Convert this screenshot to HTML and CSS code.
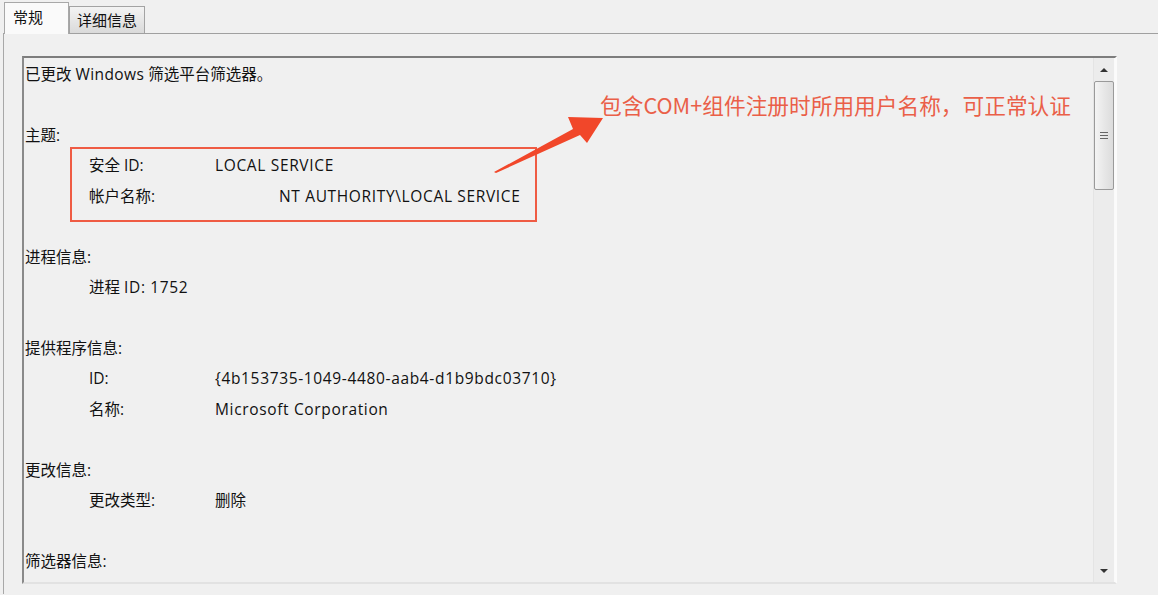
FILE: index.html
```html
<!DOCTYPE html>
<html lang="zh-CN">
<head>
<meta charset="utf-8">
<title>事件属性</title>
<link rel="stylesheet" href="styles.css">
</head>
<body>
<div class="tabs">
  <div class="tab tab-active">常规</div>
  <div class="tab">详细信息</div>
</div>
<div class="panel">
  <div class="textbox">
    <div class="content">
      <div class="line">已更改 <span class="lat">Windows</span> 筛选平台筛选器。</div>
      <div class="line"></div>
      <div class="line">主题:</div>
      <div class="line row"><span class="lbl">安全 ID:</span><span class="val">LOCAL SERVICE</span></div>
      <div class="line row"><span class="lbl">帐户名称:</span><span class="val far">NT AUTHORITY\LOCAL SERVICE</span></div>
      <div class="line"></div>
      <div class="line">进程信息:</div>
      <div class="line row">进程 <span class="val">ID: 1752</span></div>
      <div class="line"></div>
      <div class="line">提供程序信息:</div>
      <div class="line row"><span class="lbl">ID:</span><span class="val">{4b153735-1049-4480-aab4-d1b9bdc03710}</span></div>
      <div class="line row"><span class="lbl">名称:</span><span class="val">Microsoft Corporation</span></div>
      <div class="line"></div>
      <div class="line">更改信息:</div>
      <div class="line row"><span class="lbl">更改类型:</span><span>删除</span></div>
      <div class="line"></div>
      <div class="line">筛选器信息:</div>
    </div>
    <div class="scrollbar">
      <div class="sb-btn"><span class="arrow-up"></span></div>
      <div class="thumb"><span class="grip"></span></div>
      <div class="sb-track"></div>
      <div class="sb-btn"><span class="arrow-down"></span></div>
    </div>
  </div>
</div>

<div class="mark-box"></div>
<svg class="mark-arrow" width="130" height="70" viewBox="0 0 130 70">
  <polygon points="3,62 82,19 77,7 112,8 96,33 89,25 5,63" fill="#f1472a"/>
</svg>
<div class="mark-text">包含COM+组件注册时所用用户名称，可正常认证</div>
</body>
</html>
```
FILE: styles.css
```css
html, body {
  margin: 0;
  padding: 0;
}
body {
  width: 1158px;
  height: 595px;
  overflow: hidden;
  background: #f0f0f0;
  font-family: "Open Sans", "Noto Sans CJK SC", sans-serif;
  color: #111;
  position: relative;
}
.tabs {
  display: flex;
  align-items: flex-end;
  height: 33px;
  padding-left: 4px;
  position: relative;
  z-index: 2;
}
.tab {
  font-family: "Noto Sans CJK SC", sans-serif;
  font-size: 15px;
  height: 27px;
  line-height: 26px;
  padding: 0 7px;
  border: 1px solid #a3a3a3;
  border-bottom: none;
  background: linear-gradient(#f3f3f3, #dadada);
  box-sizing: border-box;
}
.tab-active {
  height: 32px;
  width: 65px;
  line-height: 28px;
  padding: 0 8px;
  margin-bottom: -1px;
  background: #fafafa;
  border-color: #a8a8a8;
}
.panel {
  margin-left: 3px;
  border-top: 1px solid #a0a0a0;
  border-left: 1px solid #a8a8a8;
  height: 561px;
  padding: 22px 0 0 18px;
  box-sizing: border-box;
  background: #f0f0f0;
}
.textbox {
  width: 1095px;
  height: 528px;
  display: flex;
  box-sizing: border-box;
  border-top: 2px solid #7d7d7d;
  border-left: 2px solid #8a8a8a;
  border-right: 2px solid #fbfbfb;
  border-bottom: 2px solid #e2e2e2;
  background: #f0f0f0;
}
.content {
  flex: 1;
  overflow: hidden;
  padding: 1px 0 0 1px;
  font-size: 15.5px;
}
.line {
  height: 30.44px;
  line-height: 30.44px;
  white-space: nowrap;
}
.lat {
  letter-spacing: 0.4px;
}
.val {
  letter-spacing: 0.65px;
}
.row {
  padding-left: 64px;
}
.lbl {
  display: inline-block;
  width: 126px;
}
.far {
  margin-left: 64px;
}
.scrollbar {
  width: 20px;
  display: flex;
  flex-direction: column;
  background: #ececec;
  border-left: 1px solid #e4e4e4;
  border-right: 1px solid #fafafa;
}
.sb-btn {
  height: 23px;
  display: flex;
  align-items: center;
  justify-content: center;
}
.arrow-up {
  width: 0;
  height: 0;
  border-left: 4px solid transparent;
  border-right: 4px solid transparent;
  border-bottom: 4px solid #333;
}
.arrow-down {
  width: 0;
  height: 0;
  border-left: 4px solid transparent;
  border-right: 4px solid transparent;
  border-top: 4px solid #333;
}
.thumb {
  height: 109px;
  border: 1px solid #9a9a9a;
  border-radius: 2px;
  background: linear-gradient(90deg, #f4f4f4, #e6e6e6 55%, #dcdcdc);
  box-sizing: border-box;
  display: flex;
  align-items: center;
  justify-content: center;
}
.grip {
  width: 8px;
  height: 7px;
  background: repeating-linear-gradient(#666 0 1px, transparent 1px 3px);
}
.sb-track {
  flex: 1;
}

.mark-box {
  position: absolute;
  left: 70px;
  top: 147px;
  width: 467px;
  height: 75px;
  border: 2px solid #ef5b44;
  box-sizing: border-box;
}
.mark-arrow {
  position: absolute;
  left: 491px;
  top: 110px;
}
.mark-text {
  position: absolute;
  left: 600px;
  top: 89px;
  font-family: "Noto Sans CJK SC", sans-serif;
  font-size: 21.7px;
  line-height: 32px;
  color: #ea5f48;
  white-space: nowrap;
}
```
